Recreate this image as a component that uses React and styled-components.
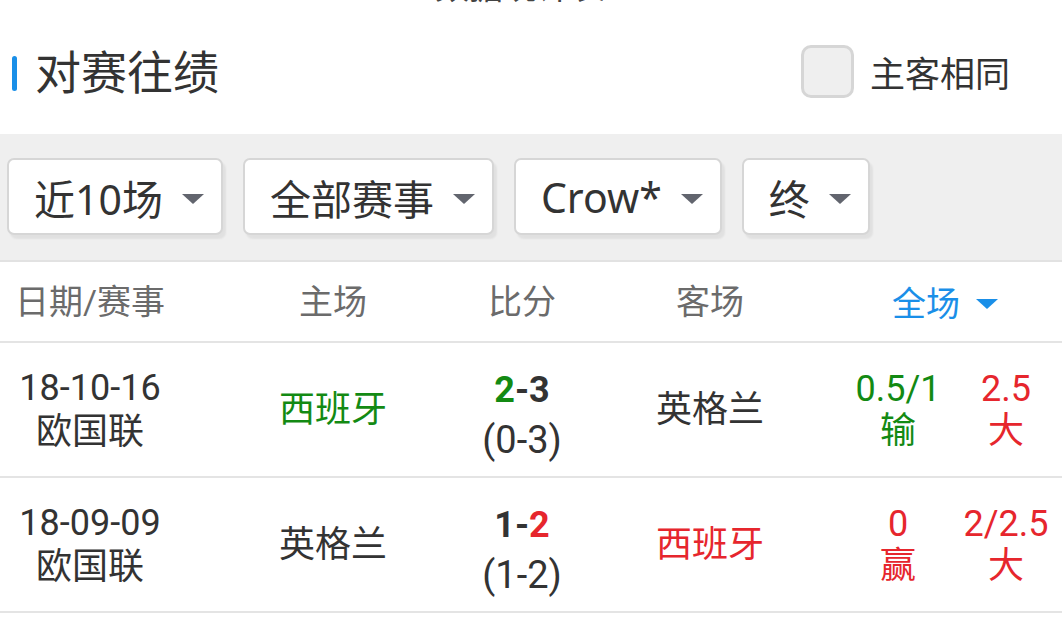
import React from 'react';
import styled, { createGlobalStyle } from 'styled-components';

const GlobalStyle = createGlobalStyle`
	* {
		box-sizing: border-box;
	}

	body {
		margin: 0;
		background: #ffffff;
		font-family: Roboto, 'Noto Sans CJK SC', 'Noto Sans', sans-serif;
		color: #333333;
	}
`;

const colors = {
	text: '#333333',
	muted: '#6b6b6b',
	green: '#138a13',
	red: '#e6262d',
	blue: '#1a8fe8',
	line: '#e4e4e4',
};

const Page = styled.div`
	width: 1062px;
	background: #ffffff;
`;

const ClippedTop = styled.div`
	height: 8px;
	overflow: hidden;
	display: flex;
	justify-content: center;
	padding-right: 22px;
`;

const ClippedText = styled.span`
	font-size: 34px;
	line-height: 40px;
	margin-top: -33px;
	color: #444444;
`;

const SectionHead = styled.div`
	height: 126px;
	display: flex;
	align-items: center;
	justify-content: space-between;
	padding: 0 52px 0 12px;
`;

const TitleWrap = styled.div`
	display: flex;
	align-items: center;
	gap: 18px;
	margin-top: 4px;
`;

const TitleBar = styled.span`
	width: 5px;
	height: 35px;
	border-radius: 3px;
	background: ${colors.blue};
`;

const Title = styled.h2`
	margin: 0;
	font-size: 46px;
	font-weight: 400;
	line-height: 1;
	color: ${colors.text};
`;

const SameToggle = styled.label`
	display: flex;
	align-items: center;
	gap: 16px;
	font-size: 35px;
	color: ${colors.text};
`;

const CheckBox = styled.span`
	width: 53px;
	height: 53px;
	border: 3px solid #d6d6d6;
	border-radius: 10px;
	background: #efefef;
`;

const FilterBand = styled.div`
	display: flex;
	gap: 20px;
	padding: 24px 0 25px 7px;
	background: #efefef;
	border-bottom: 2px solid #e2e2e2;
`;

const Select = styled.div`
	height: 77px;
	display: flex;
	align-items: center;
	gap: 19px;
	padding: 0 17px 0 25px;
	background: #ffffff;
	border: 2px solid #d6d6d6;
	border-radius: 7px;
	box-shadow: 3px 4px 2px rgba(0, 0, 0, 0.06);
	font-family: 'Noto Sans', 'Noto Sans CJK SC', sans-serif;
	font-size: 41px;
	color: ${colors.text};
`;

const Caret = styled.span`
	width: 0;
	height: 0;
	border-left: 11px solid transparent;
	border-right: 11px solid transparent;
	border-top: 10px solid ${(p) => p.color || '#62656e'};
	margin-top: 4px;
`;

const Row = styled.div`
	display: grid;
	grid-template-columns: 236px 194px 184px 192px 1fr;
	align-items: center;
	height: ${(p) => (p.head ? '81px' : '135px')};
	border-bottom: 2px solid ${colors.line};
	font-size: ${(p) => (p.head ? '34px' : '36px')};
	color: ${(p) => (p.head ? colors.muted : colors.text)};
`;

const Cell = styled.div`
	text-align: center;
	line-height: 44px;
	white-space: nowrap;
	color: ${(p) => p.color || 'inherit'};
	padding-right: ${(p) => (p.first ? '56px' : '0')};
`;

const Score = styled.div`
	font-weight: 700;
	margin-top: 10px;
	margin-bottom: 6px;
`;

const HalfTime = styled.div`
	font-size: 38px;
`;

const Tint = styled.span`
	color: ${(p) => p.color};
`;

const OddsCell = styled.div`
	display: flex;
	padding-left: 38px;
`;

const OddsCol = styled.div`
	width: 108px;
	text-align: center;
	line-height: 42px;
	white-space: nowrap;
	color: ${(p) => p.color};
`;

const HeadSwitch = styled.div`
	display: flex;
	align-items: center;
	justify-content: center;
	gap: 16px;
	padding-left: 22px;
	color: ${colors.blue};
`;

const filters = ['近10场', '全部赛事', 'Crow*', '终'];

const matches = [
	{
		date: '18-10-16',
		league: '欧国联',
		home: '西班牙',
		homeColor: colors.green,
		away: '英格兰',
		awayColor: colors.text,
		homeGoals: '2',
		awayGoals: '3',
		goalColor: colors.green,
		goalSide: 'home',
		half: '(0-3)',
		handicap: '0.5/1',
		handicapResult: '输',
		handicapColor: colors.green,
		total: '2.5',
		totalResult: '大',
		totalColor: colors.red,
	},
	{
		date: '18-09-09',
		league: '欧国联',
		home: '英格兰',
		homeColor: colors.text,
		away: '西班牙',
		awayColor: colors.red,
		homeGoals: '1',
		awayGoals: '2',
		goalColor: colors.red,
		goalSide: 'away',
		half: '(1-2)',
		handicap: '0',
		handicapResult: '赢',
		handicapColor: colors.red,
		total: '2/2.5',
		totalResult: '大',
		totalColor: colors.red,
	},
];

function App() {
	return (
		<Page>
			<GlobalStyle />
			<ClippedTop>
				<ClippedText>数据统计表</ClippedText>
			</ClippedTop>

			<SectionHead>
				<TitleWrap>
					<TitleBar />
					<Title>对赛往绩</Title>
				</TitleWrap>
				<SameToggle>
					<CheckBox />
					主客相同
				</SameToggle>
			</SectionHead>

			<FilterBand>
				{filters.map((item) => (
					<Select key={item}>
						{item}
						<Caret />
					</Select>
				))}
			</FilterBand>

			<Row head>
				<Cell first>日期/赛事</Cell>
				<Cell>主场</Cell>
				<Cell>比分</Cell>
				<Cell>客场</Cell>
				<HeadSwitch>
					全场
					<Caret color={colors.blue} />
				</HeadSwitch>
			</Row>

			{matches.map((m) => (
				<Row key={m.date}>
					<Cell first>
						{m.date}
						<br />
						{m.league}
					</Cell>
					<Cell color={m.homeColor}>{m.home}</Cell>
					<Cell>
						<Score>
							{m.goalSide === 'home' ? <Tint color={m.goalColor}>{m.homeGoals}</Tint> : m.homeGoals}
							-
							{m.goalSide === 'away' ? <Tint color={m.goalColor}>{m.awayGoals}</Tint> : m.awayGoals}
						</Score>
						<HalfTime>{m.half}</HalfTime>
					</Cell>
					<Cell color={m.awayColor}>{m.away}</Cell>
					<OddsCell>
						<OddsCol color={m.handicapColor}>
							{m.handicap}
							<br />
							{m.handicapResult}
						</OddsCol>
						<OddsCol color={m.totalColor}>
							{m.total}
							<br />
							{m.totalResult}
						</OddsCol>
					</OddsCell>
				</Row>
			))}
		</Page>
	);
}

export default App;
